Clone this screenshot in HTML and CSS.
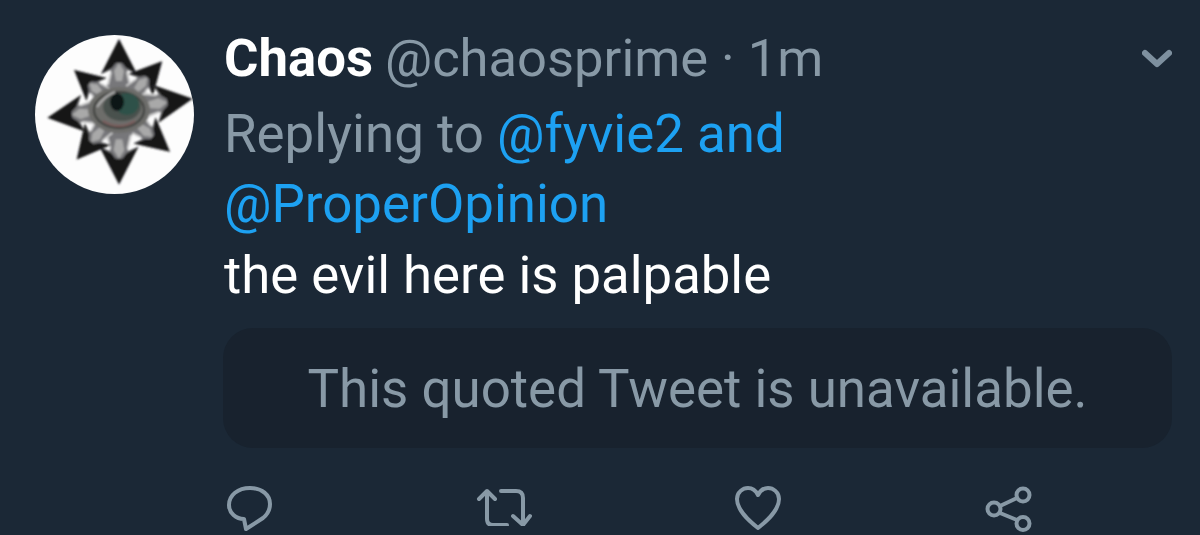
FILE: index.html
```html
<!DOCTYPE html>
<html lang="en">
<head>
<meta charset="utf-8">
<title>Tweet</title>
<link rel="stylesheet" href="styles.css">
</head>
<body>
<article class="tweet">
  <div class="avatar">
    <svg viewBox="0 0 159 159" width="159" height="159">
      <defs>
        <filter id="soft" x="-10%" y="-10%" width="120%" height="120%"><feGaussianBlur stdDeviation="1"/></filter>
        <g id="arm">
          <path d="M0 -70 L18 -35 L8 -39 L13 -20 L-13 -20 L-8 -39 L-18 -35 Z" fill="#77777a"/>
          <path d="M0 -70 L18 -35 L7 -41 L3 -46 L-3 -46 L-7 -41 L-18 -35 Z" fill="#141416"/>
          <path d="M0 -46 L5 -38 L3 -28 L-3 -28 L-5 -38 Z" fill="#a9a9a9"/>
          <path d="M-8 -37 L-11 -24 M8 -37 L11 -24" stroke="#d8d8d8" stroke-width="1.6" fill="none"/>
        </g>
      </defs>
      <circle cx="79.5" cy="79.5" r="79.5" fill="#fdfdfd"/>
      <g filter="url(#soft)">
        <use href="#arm" transform="translate(84 74)"/>
        <use href="#arm" transform="translate(84 74) rotate(42) scale(.92)"/>
        <use href="#arm" transform="translate(84 74) rotate(82) scale(1.06)"/>
        <use href="#arm" transform="translate(84 74) rotate(130) scale(.95)"/>
        <use href="#arm" transform="translate(84 74) rotate(180) scale(1.08)"/>
        <use href="#arm" transform="translate(84 74) rotate(220) scale(.94)"/>
        <use href="#arm" transform="translate(84 74) rotate(263) scale(1.03)"/>
        <use href="#arm" transform="translate(84 74) rotate(311) scale(.85)"/>
        <ellipse cx="84" cy="75" rx="31" ry="23" fill="#6d6d6a"/>
        <ellipse cx="84" cy="75" rx="25" ry="18" fill="none" stroke="#3b3d3a" stroke-width="2"/>
        <ellipse cx="87" cy="72" rx="19" ry="14" fill="#4a514d"/>
        <ellipse cx="92" cy="69" rx="12" ry="11" fill="#2f5148"/>
        <ellipse cx="82" cy="67" rx="7" ry="9" fill="#0e1317"/>
        <path d="M68 86 Q84 96 100 86" fill="none" stroke="#7d5a5a" stroke-width="2"/>
        <path d="M62 72 Q70 60 80 57" fill="none" stroke="#b0b0b0" stroke-width="2"/>
      </g>
    </svg>
  </div>
  <div class="body">
    <div class="head">
      <span class="name">Chaos</span>
      <span class="meta">@chaosprime · 1m</span>
    </div>
    <div class="reply">Replying to <span class="link">@fyvie2 and<br>@ProperOpinion</span></div>
    <p class="text">the evil here is palpable</p>
    <div class="quote">This quoted Tweet is unavailable.</div>
    <div class="actions">
      <svg class="icon" viewBox="0 0 46 46" width="46" height="46"><path d="M23 2 C11 2 2 9 2 19 C2 27 9 33 17 33 L19 43 L36 32 C41 28 43 24 43 18 C43 9 35 2 23 2 Z"/></svg>
      <svg class="icon" viewBox="0 -2 56 40" width="56" height="40"><path d="M3 11 L11 3 L19 11 M11 3 V31 Q11 37 17 37 H31 M25 3 H40 Q47 3 47 10 V36 M37 28 L47 37 L54 28"/></svg>
      <svg class="icon" viewBox="0 0 48 44" width="48" height="44"><path d="M24 42 C14 34 3 24 3 13 C3 6 9 2 14 2 C19 2 22 5 24 9 C26 5 29 2 34 2 C39 2 45 6 45 13 C45 24 34 34 24 42 Z"/></svg>
      <svg class="icon" viewBox="0 0 48 47" width="48" height="47"><circle cx="9" cy="23" r="6.5"/><circle cx="38" cy="9" r="6.5"/><circle cx="38" cy="37.5" r="6.5"/><path d="M15 20 L32 12 M15 27 L32 34"/></svg>
    </div>
  </div>
  <svg class="caret" viewBox="0 0 30 20" width="30" height="20"><path d="M3 4 L15 15 L27 4"/></svg>
</article>
</body>
</html>
```
FILE: styles.css
```css
* { box-sizing: border-box; }
html, body { margin: 0; height: 100%; }
body {
  background: #1b2836;
  font-family: Roboto, "Liberation Sans", sans-serif;
  font-size: 52.7px;
  overflow: hidden;
}
.tweet {
  position: relative;
  display: flex;
  gap: 30px;
  height: 535px;
  padding: 35px 0 0 35px;
}
.avatar { flex: none; width: 159px; height: 159px; }
.avatar svg { display: block; }
.body { flex: none; width: 947px; }
.head { display: flex; gap: 12px; height: 46px; line-height: 46px; }
.name { color: #fff; font-weight: 700; }
.meta { color: #8899a6; font-size: 52.5px; }
.reply { margin-top: 18px; color: #8899a6; font-size: 52.85px; line-height: 70px; }
.link { color: #1da1f2; }
.text { margin: 2px 0 0; color: #fff; font-size: inherit; line-height: 68px; }
.quote {
  width: 949px;
  height: 120px;
  margin: 19px 0 0 -1px;
  border-radius: 30px;
  background: #18222e;
  color: #8899a6;
  font-size: 52.9px;
  line-height: 122px;
  text-align: center;
}
.actions {
  display: flex;
  align-items: flex-start;
  justify-content: space-between;
  width: 806px;
  margin: 38px 0 0 3px;
}
.icon { display: block; fill: none; stroke: #8899a6; stroke-width: 4; stroke-linecap: round; stroke-linejoin: round; }
.caret {
  position: absolute;
  top: 49px;
  left: 1142px;
  fill: none;
  stroke: #7e909f;
  stroke-width: 6;
  stroke-linecap: round;
  stroke-linejoin: round;
}
```
